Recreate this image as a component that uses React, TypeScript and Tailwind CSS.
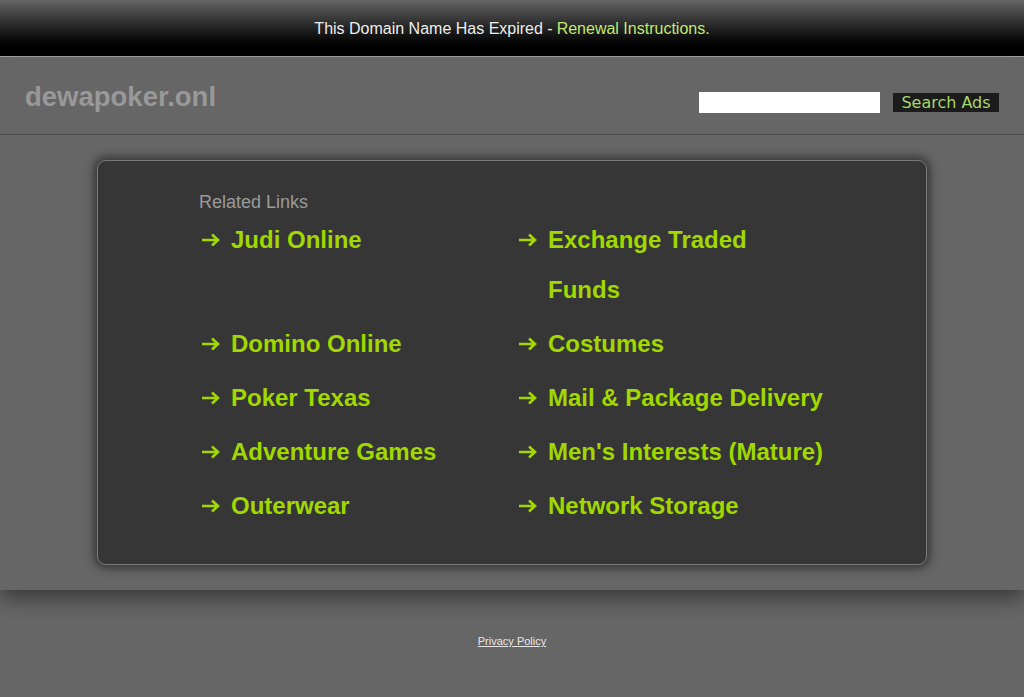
const links: [string, string][] = [
  ['Judi Online', 'Exchange Traded\nFunds'],
  ['Domino Online', 'Costumes'],
  ['Poker Texas', 'Mail & Package Delivery'],
  ['Adventure Games', "Men's Interests (Mature)"],
  ['Outerwear', 'Network Storage'],
];

const Arrow = () => (
  <svg width="19" height="14" viewBox="0 0 19 14" className="shrink-0 mt-[18px]">
    <path d="M1 7 H17 M11 1.5 L17 7 L11 12.5" stroke="#a0d800" strokeWidth="2.6" fill="none" />
  </svg>
);

const LinkItem = ({ label }: { label: string }) => (
  <a href="#" className="flex items-start mb-1">
    <span className="w-[32px] pl-[2px] flex">
      <Arrow />
    </span>
    <span className="w-[280px] text-[24px] font-bold leading-[50px] text-[#a0d800] whitespace-pre-line">{label}</span>
  </a>
);

export default function App() {
  return (
    <div className="min-h-[697px] bg-[#666666] font-['Liberation_Sans',Arial,sans-serif]">
      <div className="h-[55px] pt-[1px] bg-gradient-to-b from-[#666666] to-[#000000] flex items-center justify-center text-[16px] border-b border-[#aaaaaa] box-content">
        <span className="text-[#eeeeee]">This Domain Name Has Expired - </span>
        <a href="#" className="text-[#c0e873] ml-1">Renewal Instructions.</a>
      </div>

      <div className="relative z-10 shadow-[0_8px_20px_rgba(0,0,0,0.45)]">
        <div className="h-[77px] flex justify-between items-start border-b border-[#4a4a4a] px-[25px] box-content">
          <div className="text-[27.5px] font-bold text-[#999999] mt-[19px]">dewapoker.onl</div>
          <div className="flex items-start mt-[35px]">
            <input className="w-[181px] h-[21px] bg-white border-0 outline-none" />
            <button className="ml-[13px] mt-[1px] h-[19px] w-[106px] bg-[#1b1b1b] text-[#a5d86a] text-[16px] leading-[19px] font-['DejaVu_Sans',sans-serif]">
              Search Ads
            </button>
          </div>
        </div>

        <div className="pt-[25px] pb-[25px] flex justify-center">
          <div className="w-[830px] h-[405px] bg-[#363636] border border-[#7a7a7a] rounded-[9px] shadow-[0_0_10px_3px_rgba(0,0,0,0.5)] pl-[101px] pt-[29px]">
            <div className="text-[18px] text-[#9a9a9a] leading-[24px]">Related Links</div>
            <div className="mt-[1px] grid grid-cols-[317px_318px]">
              {links.map(([a, b]) => (
                <>
                  <LinkItem key={a} label={a} />
                  <LinkItem key={b} label={b} />
                </>
              ))}
            </div>
          </div>
        </div>
      </div>

      <div className="pt-[38px] text-center">
        <a href="#" className="text-[11px] text-[#e6e6e6] underline">Privacy Policy</a>
      </div>
    </div>
  );
}
